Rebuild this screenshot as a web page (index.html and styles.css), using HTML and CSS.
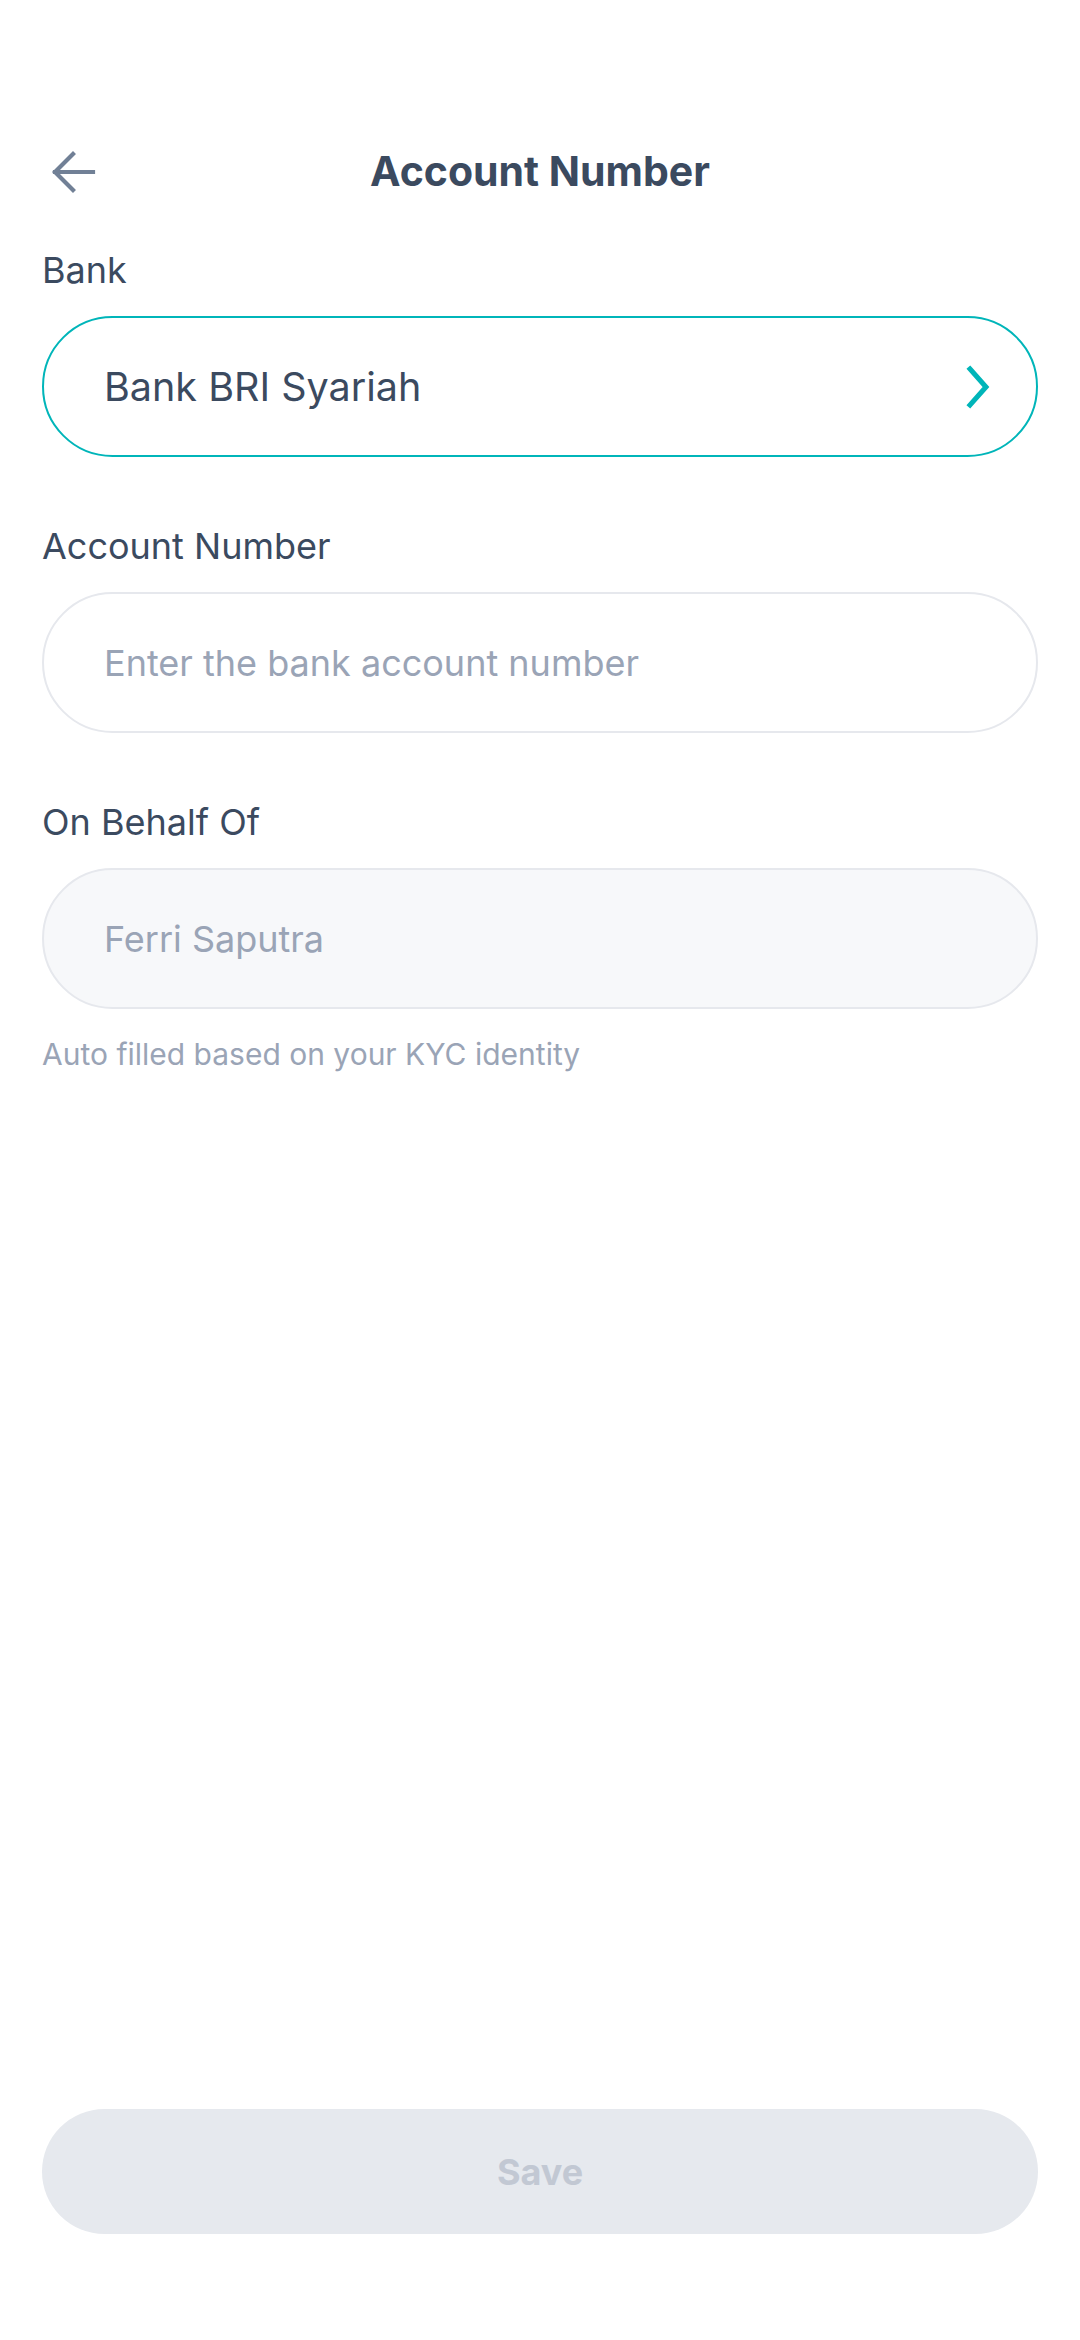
FILE: index.html
```html
<!DOCTYPE html>
<html lang="en">
<head>
<meta charset="utf-8">
<title>Account Number</title>
<link rel="stylesheet" href="styles.css">
</head>
<body>
<div class="screen">
  <header class="topbar">
    <button class="back" aria-label="Back">
      <svg width="48" height="48" viewBox="0 0 48 48" fill="none" stroke="#718096" stroke-width="4.2" stroke-linecap="square" stroke-linejoin="miter">
        <path d="M6 22 H44"/>
        <path d="M24 4 L6 22 L24 40"/>
      </svg>
    </button>
    <h1 class="title">Account Number</h1>
  </header>

  <main class="form">
    <div class="field">
      <label class="label">Bank</label>
      <div class="input input-select">
        <span class="value">Bank BRI Syariah</span>
        <svg class="chevron" width="28" height="44" viewBox="0 0 28 44" fill="none" stroke="#00b5b9" stroke-width="5" stroke-linecap="square">
          <path d="M5 4 L21 22 L5 40"/>
        </svg>
      </div>
    </div>

    <div class="field">
      <label class="label">Account Number</label>
      <div class="input">
        <span class="placeholder">Enter the bank account number</span>
      </div>
    </div>

    <div class="field">
      <label class="label">On Behalf Of</label>
      <div class="input input-disabled">
        <span class="placeholder">Ferri Saputra</span>
      </div>
      <p class="hint">Auto filled based on your KYC identity</p>
    </div>
  </main>

  <footer class="actions">
    <button class="save" disabled>Save</button>
  </footer>
</div>
</body>
</html>
```

FILE: styles.css
```css
* { box-sizing: border-box; }

html, body {
  margin: 0;
  padding: 0;
  background: #ffffff;
}

body {
  font-family: Inter, "Noto Sans", "Liberation Sans", sans-serif;
  color: #3b4a5f;
}

.screen {
  width: 1080px;
  height: 2340px;
  display: flex;
  flex-direction: column;
  padding: 0 42px;
}

.topbar {
  margin-top: 121px;
  height: 100px;
  display: flex;
  align-items: center;
  justify-content: center;
  position: relative;
}

.back {
  position: absolute;
  left: 7px;
  top: 29px;
  width: 48px;
  height: 48px;
  padding: 0;
  border: 0;
  background: none;
  display: flex;
}

.title {
  margin: 0;
  font-size: 41px;
  font-weight: 700;
  color: #3b4a5f;
  letter-spacing: 0;
}

.form {
  display: flex;
  flex-direction: column;
  gap: 67px;
  margin-top: 27px;
}

.field {
  display: flex;
  flex-direction: column;
}

.label {
  font-size: 36px;
  line-height: 44px;
  color: #3b4a5f;
  margin-bottom: 24px;
}

.input {
  height: 141px;
  border: 2px solid #e6e8ed;
  border-radius: 71px;
  padding: 0 43px 0 60px;
  display: flex;
  align-items: center;
  background: #ffffff;
  font-size: 39.5px;
}

.input-select {
  border-color: #00b5b9;
  justify-content: space-between;
}

.input-disabled {
  background: #f7f8fa;
}

.value {
  color: #3b4a5f;
}

.placeholder {
  color: #9aa4b6;
  font-size: 36px;
}

.chevron {
  display: block;
}

.hint {
  margin: 27px 0 0;
  font-size: 30px;
  line-height: 36px;
  color: #9aa4b6;
}

.actions {
  margin-top: auto;
  padding-bottom: 106px;
}

.save {
  width: 100%;
  height: 125px;
  border: 0;
  border-radius: 63px;
  background: #e6e9ee;
  color: #c2c8d3;
  font-family: Inter, "Noto Sans", "Liberation Sans", sans-serif;
  font-size: 36px;
  font-weight: 700;
}
```
